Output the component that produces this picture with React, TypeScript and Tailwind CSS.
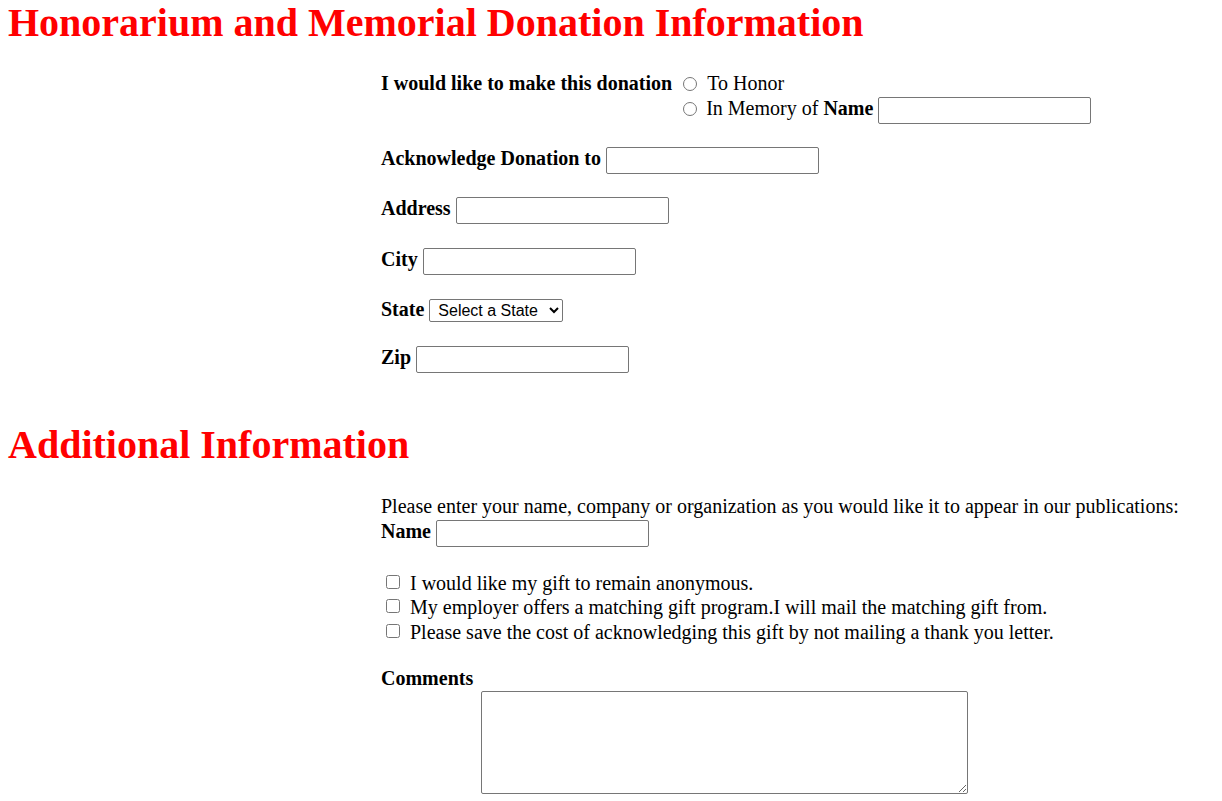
export default function App() {
  const serif = { fontFamily: '"Liberation Serif", "Times New Roman", serif' };
  const field = 'h-[27px] w-[213px] rounded-[2px] border border-[#767676] bg-white px-1';
  const checks = [
    'I would like my gift to remain anonymous.',
    'My employer offers a matching gift program.I will mail the matching gift from.',
    'Please save the cost of acknowledging this gift by not mailing a thank you letter.',
  ];

  return (
    <div className="min-h-screen bg-white text-[20px] leading-[23px] text-black" style={serif}>
      {/* Honorarium section */}
      <h1 className="pl-2 text-[40px] font-bold leading-[45px] text-[#ff0000]">
        Honorarium and Memorial Donation Information
      </h1>

      <div className="mt-[27px] pl-[381px]">
        <div className="flex items-start">
          <span className="h-[23px] font-bold">I would like to make this donation</span>
          <div className="ml-[11px] flex flex-col">
            <label className="flex h-[25px] items-center pb-[2px]">
              <input type="radio" name="kind" className="m-0 h-[14px] w-[14px]" />
              <span className="ml-[10px]">To Honor</span>
            </label>
            <label className="flex h-[27px] items-center">
              <input type="radio" name="kind" className="m-0 mb-[4px] h-[14px] w-[14px]" />
              <span className="mb-[4px] ml-[9px]">
                In Memory of <b>Name</b>
              </span>
              <input type="text" className={`${field} ml-[5px]`} />
            </label>
          </div>
        </div>

        <div className="mt-[23px] flex h-[27px] items-center">
          <b className="mb-[4px]">Acknowledge Donation to</b>
          <input type="text" className={`${field} ml-[5px]`} />
        </div>
        <div className="mt-[23px] flex h-[27px] items-center">
          <b className="mb-[4px]">Address</b>
          <input type="text" className={`${field} ml-[5px]`} />
        </div>
        <div className="mt-[24px] flex h-[27px] items-center">
          <b className="mb-[4px]">City</b>
          <input type="text" className={`${field} ml-[5px]`} />
        </div>
        <div className="mt-[24px] flex h-[23px] items-center">
          <b className="mb-[2px]">State</b>
          <select
            className="ml-[5px] h-[23px] w-[134px] rounded-[2px] border border-[#767676] bg-white pl-[4px] text-[16px] text-black"
            style={{ fontFamily: '"Liberation Sans", Arial, sans-serif' }}
          >
            <option>Select a State</option>
          </select>
        </div>
        <div className="mt-[24px] flex h-[27px] items-center">
          <b className="mb-[4px]">Zip</b>
          <input type="text" className={`${field} ml-[5px]`} />
        </div>
      </div>

      {/* Additional section */}
      <h2 className="mt-[50px] pl-2 text-[40px] font-bold leading-[44px] text-[#ff0000]">
        Additional Information
      </h2>

      <div className="mt-[28px] pl-[381px]">
        <p>Please enter your name, company or organization as you would like it to appear in our publications:</p>
        <div className="mt-[2px] flex h-[27px] items-center">
          <b className="mb-[4px]">Name</b>
          <input type="text" className={`${field} ml-[5px]`} />
        </div>

        <div className="mt-[24px] flex flex-col">
          {checks.map(t => (
            <label key={t} className="flex h-[24.5px] items-center">
              <input type="checkbox" className="m-0 mb-[3px] ml-[5px] h-[14px] w-[14px]" />
              <span className="ml-[10px]">{t}</span>
            </label>
          ))}
        </div>

        <div className="mt-[22px] font-bold">Comments</div>
        <textarea className="ml-[100px] mt-[1px] block h-[103px] w-[487px] rounded-[2px] border border-[#767676] bg-white" />
      </div>
    </div>
  );
}
